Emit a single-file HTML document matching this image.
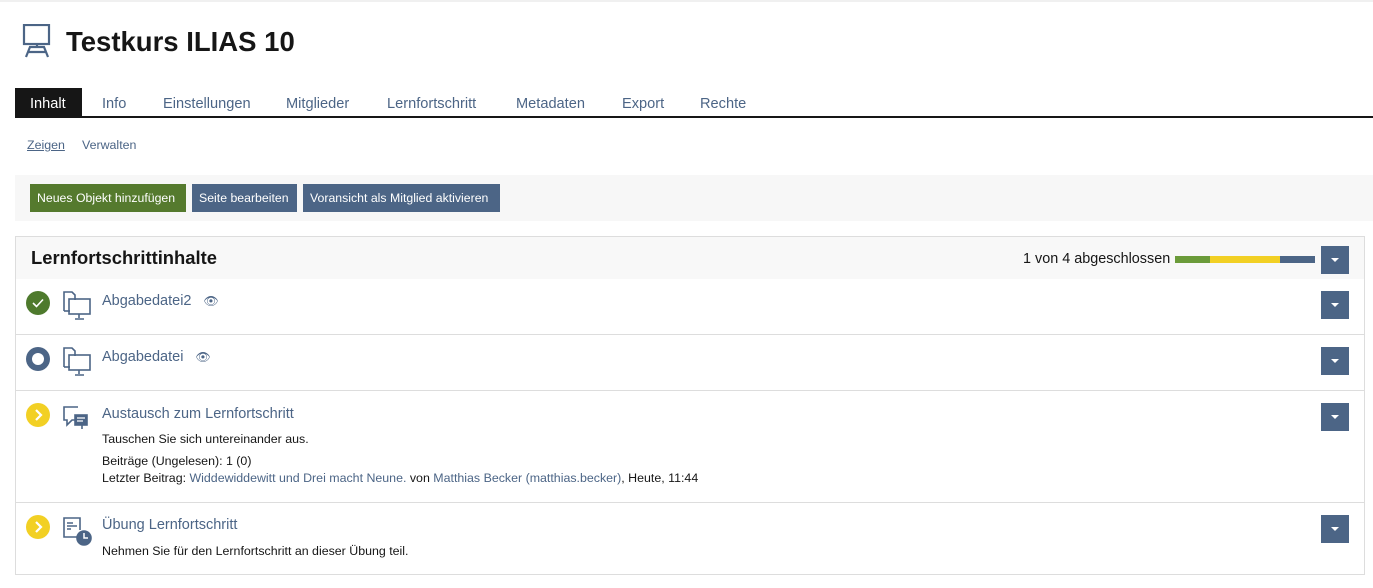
<!DOCTYPE html>
<html><head><meta charset="utf-8"><style>
*{box-sizing:border-box;margin:0;padding:0}
body{width:1373px;height:588px;background:#fff;font-family:"Liberation Sans",sans-serif;color:#161616;position:relative;overflow:hidden}
.abs{position:absolute}
.tab{position:absolute;top:88px;height:29px;line-height:33px;font-size:14.6px;color:#4c6586}
.btn{position:absolute;top:184px;height:28px;line-height:28px;color:#fff;font-size:12.3px;padding:0 7px;background:#4c6586;white-space:nowrap}
.dd{position:absolute;left:1321px;width:28px;height:28px;background:#4c6586}
.dd:after{content:"";position:absolute;left:10px;top:12px;border-left:4px solid transparent;border-right:4px solid transparent;border-top:4px solid #fff}
.row{position:absolute;left:16px;width:1348px;border-top:1px solid #ddd}
.t{position:absolute;left:86px;font-size:14.5px;color:#4c6586}
.s{position:absolute;left:86px;font-size:12.4px;color:#161616;white-space:nowrap}
.s a{color:#4c6586;text-decoration:none}
.stat{position:absolute;left:10px;width:24px;height:24px;border-radius:50%}
</style></head><body>
<div class="abs" style="left:0;top:0;width:1373px;height:2px;background:#f0f0f0"></div>
<svg class="abs" style="left:22px;top:24px" width="30" height="34" viewBox="0 0 30 34" fill="none" stroke="#4c6586" stroke-width="2.2"><rect x="2" y="1" width="25" height="19"/><path d="M15 20v3M4 33l4-10h14l4 10M6 28h18"/></svg>
<div class="abs" style="left:66px;top:26px;font-size:27.5px;font-weight:bold;color:#161616">Testkurs ILIAS 10</div>
<div class="abs" style="left:15px;top:88px;width:67px;height:29px;background:#161616"></div>
<div class="tab" style="left:30px;color:#fff">Inhalt</div>
<div class="tab" style="left:102px">Info</div>
<div class="tab" style="left:163px">Einstellungen</div>
<div class="tab" style="left:286px">Mitglieder</div>
<div class="tab" style="left:387px">Lernfortschritt</div>
<div class="tab" style="left:516px">Metadaten</div>
<div class="tab" style="left:622px">Export</div>
<div class="tab" style="left:700px">Rechte</div>
<div class="abs" style="left:15px;top:116px;width:1358px;height:2px;background:#161616"></div>
<div class="abs" style="left:27px;top:138px;font-size:12.4px;color:#4c6586;text-decoration:underline">Zeigen</div>
<div class="abs" style="left:82px;top:138px;font-size:12.4px;color:#4c6586">Verwalten</div>
<div class="abs" style="left:15px;top:175px;width:1358px;height:46px;background:#f7f7f7"></div>
<div class="btn" style="left:30px;width:156px;background:#557a2e">Neues Objekt hinzufügen</div>
<div class="btn" style="left:192px;width:105px">Seite bearbeiten</div>
<div class="btn" style="left:303px;width:197px">Voransicht als Mitglied aktivieren</div>
<div class="abs" style="left:15px;top:236px;width:1350px;height:339px;border:1px solid #ddd"></div>
<div class="abs" style="left:16px;top:237px;width:1348px;height:42px;background:#f8f8f8"></div>
<div class="abs" style="left:31px;top:247px;font-size:18.4px;font-weight:bold;color:#161616">Lernfortschrittinhalte</div>
<div class="abs" style="left:1023px;top:251px;font-size:14.4px">1 von 4 abgeschlossen</div>
<div class="abs" style="left:1175px;top:256px;width:35px;height:7px;background:#6b9b3a"></div>
<div class="abs" style="left:1210px;top:256px;width:70px;height:7px;background:#f2d024"></div>
<div class="abs" style="left:1280px;top:256px;width:35px;height:7px;background:#4c6586"></div>
<div class="dd" style="top:246px"></div>

<div class="row" style="top:279px;height:55px;border-top:none">
<div class="stat" style="top:12px;background:#4e7a2d"><svg width="24" height="24"><path d="M7 12l3.5 3.5 6.5-7" stroke="#fff" stroke-width="1.6" fill="none"/></svg></div>
<svg class="abs" style="left:44px;top:9px" width="32" height="34" fill="none" stroke="#4c6586" stroke-width="1.6"><path d="M4 23V4h8l3 3v5"/><path d="M4 23h6"/><rect x="9" y="11" width="21" height="15"/><path d="M19 26v4M15 31h9"/></svg>
<div class="t" style="top:14px">Abgabedatei2 <span style="font-size:12px;margin-left:8px">👁</span></div>
<div class="dd" style="top:12px;left:1305px"></div>
</div>
<div class="row" style="top:334px;height:56px">
<div class="stat" style="top:12px;background:#4c6586"><div style="position:absolute;left:6px;top:6px;width:12px;height:12px;border-radius:50%;background:#fff"></div></div>
<svg class="abs" style="left:44px;top:9px" width="32" height="34" fill="none" stroke="#4c6586" stroke-width="1.6"><path d="M4 23V4h8l3 3v5"/><path d="M4 23h6"/><rect x="9" y="11" width="21" height="15"/><path d="M19 26v4M15 31h9"/></svg>
<div class="t" style="top:14px">Abgabedatei <span style="font-size:12px;margin-left:8px">👁</span></div>
<div class="dd" style="top:12px;left:1305px"></div>
</div>
<div class="row" style="top:390px;height:112px">
<div class="stat" style="top:12px;background:#f2d024"><svg width="24" height="24"><path d="M10 7l5 5-5 5" stroke="#fff" stroke-width="2.2" fill="none"/></svg></div>
<svg class="abs" style="left:46px;top:14px" width="28" height="28" fill="none" stroke="#4c6586" stroke-width="1.6"><path d="M16 2H2v13h3v5l5-5h4"/><rect x="13" y="10" width="12" height="10" fill="#4c6586"/><path d="M15 13h8M15 16h6" stroke="#fff" stroke-width="1.2"/><path d="M20 20v4" /></svg>
<div class="t" style="top:15px">Austausch zum Lernfortschritt</div>
<div class="s" style="top:41px">Tauschen Sie sich untereinander aus.</div>
<div class="s" style="top:63px">Beiträge (Ungelesen): 1 (0)</div>
<div class="s" style="top:80px">Letzter Beitrag: <a>Widdewiddewitt und Drei macht Neune.</a> von <a>Matthias Becker (matthias.becker)</a>, Heute, 11:44</div>
<div class="dd" style="top:12px;left:1305px"></div>
</div>
<div class="row" style="top:502px;height:72px">
<div class="stat" style="top:12px;background:#f2d024"><svg width="24" height="24"><path d="M10 7l5 5-5 5" stroke="#fff" stroke-width="2.2" fill="none"/></svg></div>
<svg class="abs" style="left:46px;top:13px" width="30" height="30" fill="none" stroke="#4c6586" stroke-width="1.6"><path d="M18 21H2V2h16v12"/><path d="M5 7h6M5 10h10M5 13h4"/><circle cx="22" cy="22" r="7" fill="#4c6586"/><path d="M22 17v5h4" stroke="#fff" stroke-width="1.5"/></svg>
<div class="t" style="top:14px">Übung Lernfortschritt</div>
<div class="s" style="top:41px">Nehmen Sie für den Lernfortschritt an dieser Übung teil.</div>
<div class="dd" style="top:12px;left:1305px"></div>
</div>
</body></html>
